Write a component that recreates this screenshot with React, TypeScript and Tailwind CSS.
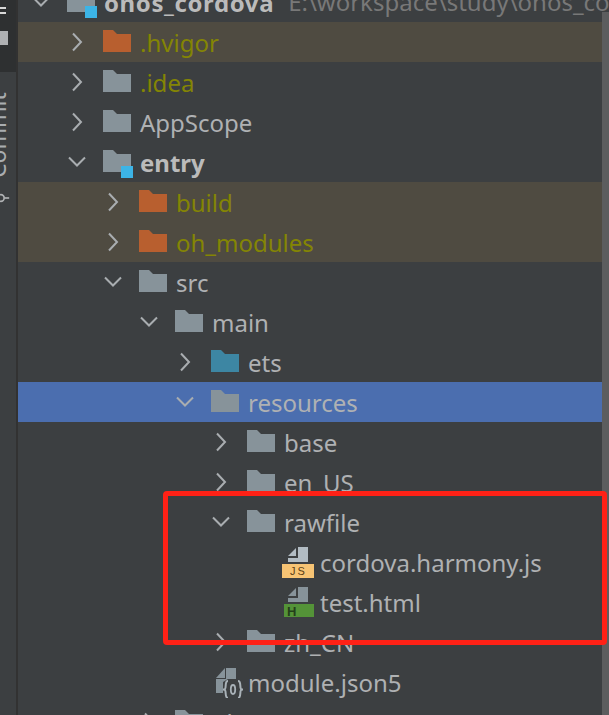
const depthPad = [
  "pl-[13px]",
  "pl-[49px]",
  "pl-[85px]",
  "pl-[121px]",
  "pl-[157px]",
  "pl-[193px]",
];

type Kind = "plain" | "module" | "build" | "source";
type FileKind = "js" | "html" | "json";

interface Node {
  label: string;
  depth: number;
  open?: boolean;
  kind?: Kind;
  file?: FileKind;
  tone?: "normal" | "ignored" | "bold";
  rowClass?: string;
  hint?: string;
}

const nodes: Node[] = [
  { label: "onos_cordova", depth: 0, open: true, kind: "module", tone: "bold", hint: "E:\\workspace\\study\\onos_cordova" },
  { label: ".hvigor", depth: 1, kind: "build", tone: "ignored", rowClass: "bg-[#4f4b41]" },
  { label: ".idea", depth: 1, tone: "ignored" },
  { label: "AppScope", depth: 1 },
  { label: "entry", depth: 1, open: true, kind: "module", tone: "bold" },
  { label: "build", depth: 2, kind: "build", tone: "ignored", rowClass: "bg-[#4f4b41]" },
  { label: "oh_modules", depth: 2, kind: "build", tone: "ignored", rowClass: "bg-[#4f4b41]" },
  { label: "src", depth: 2, open: true },
  { label: "main", depth: 3, open: true },
  { label: "ets", depth: 4, kind: "source" },
  { label: "resources", depth: 4, open: true, rowClass: "bg-[#4b6eaf]" },
  { label: "base", depth: 5 },
  { label: "en_US", depth: 5 },
  { label: "rawfile", depth: 5, open: true },
  { label: "cordova.harmony.js", depth: 5, file: "js" },
  { label: "test.html", depth: 5, file: "html" },
  { label: "zh_CN", depth: 5 },
  { label: "module.json5", depth: 4, file: "json" },
  { label: "ohos", depth: 3 },
];

function Chevron({ open }: { open?: boolean }) {
  return (
    <svg viewBox="0 0 20 20" className="w-5 h-5 shrink-0" fill="none" stroke="#a9adb0" strokeWidth="2">
      {open ? <path d="M2 5.5 L10 13.5 L18 5.5" /> : <path d="M6 1.5 L14 10 L6 18.5" />}
    </svg>
  );
}

function Folder({ kind = "plain" }: { kind?: Kind }) {
  const fill = kind === "build" ? "#b85f2f" : kind === "source" ? "#3d86a3" : "#87939a";
  return (
    <svg viewBox="0 0 28 22" className="w-7 h-[22px] shrink-0 overflow-visible">
      <path d="M0 0 H10 L14 4 H28 V22 H0 Z" fill={fill} />
      {kind === "module" && <rect x="18" y="16" width="12" height="12" fill="#3cb4e6" />}
    </svg>
  );
}

function FileIcon({ file }: { file: FileKind }) {
  if (file === "js") {
    return (
      <svg viewBox="0 0 32 32" className="w-8 h-8 shrink-0">
        <path d="M6 10 L14 2 V10 Z" fill="#b2bcc3" />
        <path d="M16 1 H26 V16 H6 V12 H16 Z" fill="#b2bcc3" />
        <rect x="0" y="18" width="32" height="14" fill="#f7c474" />
        <text x="16.5" y="29" textAnchor="middle" fontSize="11" fontFamily="Liberation Sans, sans-serif" letterSpacing="2" fill="#5c3f14">JS</text>
      </svg>
    );
  }
  if (file === "html") {
    return (
      <svg viewBox="0 0 32 32" className="w-8 h-8 shrink-0">
        <path d="M6 10 L14 2 V10 Z" fill="#87939a" />
        <path d="M16 1 H26 V16 H6 V12 H16 Z" fill="#87939a" />
        <rect x="2" y="18" width="30" height="13" fill="#549338" />
        <text x="5" y="30" fontSize="13" fontWeight="700" fontFamily="Liberation Sans, sans-serif" fill="#24401a">H</text>
      </svg>
    );
  }
  return (
    <svg viewBox="0 0 28 32" className="w-7 h-8 shrink-0">
      <path d="M0 12 L9 2 V12 Z" fill="#87939a" />
      <path d="M10 2 H20 V13 H12 L7 16 V27 H0 V13 H10 Z" fill="#87939a" />
      <path d="M12 15 C8.500 15 10.500 21 9 23 C8.500 23.500 8 23.500 7 23.500 C8 23.500 8.500 23.500 9 24 C10.500 26 8.500 32 12 32" fill="none" stroke="#a9b2b8" strokeWidth="2" />
      <path d="M22 15 C25.500 15 23.500 21 25 23 C25.500 23.500 26 23.500 27 23.500 C26 23.500 25.500 23.500 25 24 C23.500 26 25.500 32 22 32" fill="none" stroke="#a9b2b8" strokeWidth="2" />
      <ellipse cx="17" cy="23.500" rx="2.200" ry="4.500" fill="none" stroke="#a9b2b8" strokeWidth="1.800" />
    </svg>
  );
}

function Row({ node }: { node: Node }) {
  const tone =
    node.tone === "ignored"
      ? "text-[#848504]"
      : node.tone === "bold"
        ? "text-[#bbbbbb] font-bold"
        : "text-[#afb1b3]";
  const isFile = !!node.file;
  return (
    <div className={`flex items-center h-10 shrink-0 whitespace-nowrap ${depthPad[node.depth]} ${node.rowClass ?? "bg-[#3c3f41]"}`}>
      {!isFile && (
        <div className="w-[36px] shrink-0 flex">
          <Chevron open={node.open} />
        </div>
      )}
      {isFile ? (
        <div className={node.file === "json" ? "ml-[41px] mr-[4px]" : "ml-[71px] mr-[6px]"}>
          <FileIcon file={node.file!} />
        </div>
      ) : (
        <div className="mr-[9px] -mt-0.5">
          <Folder kind={node.kind} />
        </div>
      )}
      <span className={`text-[24px] leading-10 translate-y-px ${node.hint ? "tracking-[0.6px]" : ""} ${tone}`}>{node.label}</span>
      {node.hint && <span className="ml-[14px] text-[24px] text-[#787878]">{node.hint}</span>}
    </div>
  );
}

function Sidebar() {
  return (
    <div className="w-[18px] shrink-0 h-[715px] relative flex flex-col bg-[#3c3f41] border-r-2 border-[#323232] overflow-hidden">
      <div className="h-[72px] bg-[#2e3031] shrink-0 flex flex-col items-start">
        <div className="w-[6px] h-[2px] mt-[7px] bg-[#d8d8d8]" />
        <div className="w-[6px] h-[2px] mt-[3px] bg-[#d8d8d8]" />
        <div className="w-2 h-[14px] mt-[17px] bg-[#afb1b3]" />
      </div>
      <div className="absolute left-[-13px] top-[88px] [writing-mode:vertical-rl] rotate-180 text-[23px] leading-5 text-[#a9adb0] h-[90px]">
        Commit
      </div>
      <svg viewBox="0 0 12 14" className="absolute left-0 top-[191px] w-[10px] h-3.5" fill="none" stroke="#afb1b3" strokeWidth="2">
        <circle cx="1" cy="7" r="4" />
        <path d="M5 7 H11" />
      </svg>
    </div>
  );
}

export default function App() {
  return (
    <div className="w-[609px] h-[715px] overflow-hidden flex bg-[#3c3f41] font-['Noto_Sans','Open_Sans',sans-serif] relative">
      <Sidebar />
      <div className="flex-1 min-w-0 flex flex-col -mt-[18px] overflow-hidden">
        {nodes.map((n) => (
          <Row key={n.label} node={n} />
        ))}
      </div>
      {/* scrollbar thumb sits over the tree */}
      <div className="absolute right-0 top-3 bottom-0 w-[7px] bg-[#5c5d5e]" />
      <div className="absolute left-[163px] top-[491px] w-[444px] h-[154px] border-[5px] border-[#ff2116] rounded-[4px] pointer-events-none" />
    </div>
  );
}
